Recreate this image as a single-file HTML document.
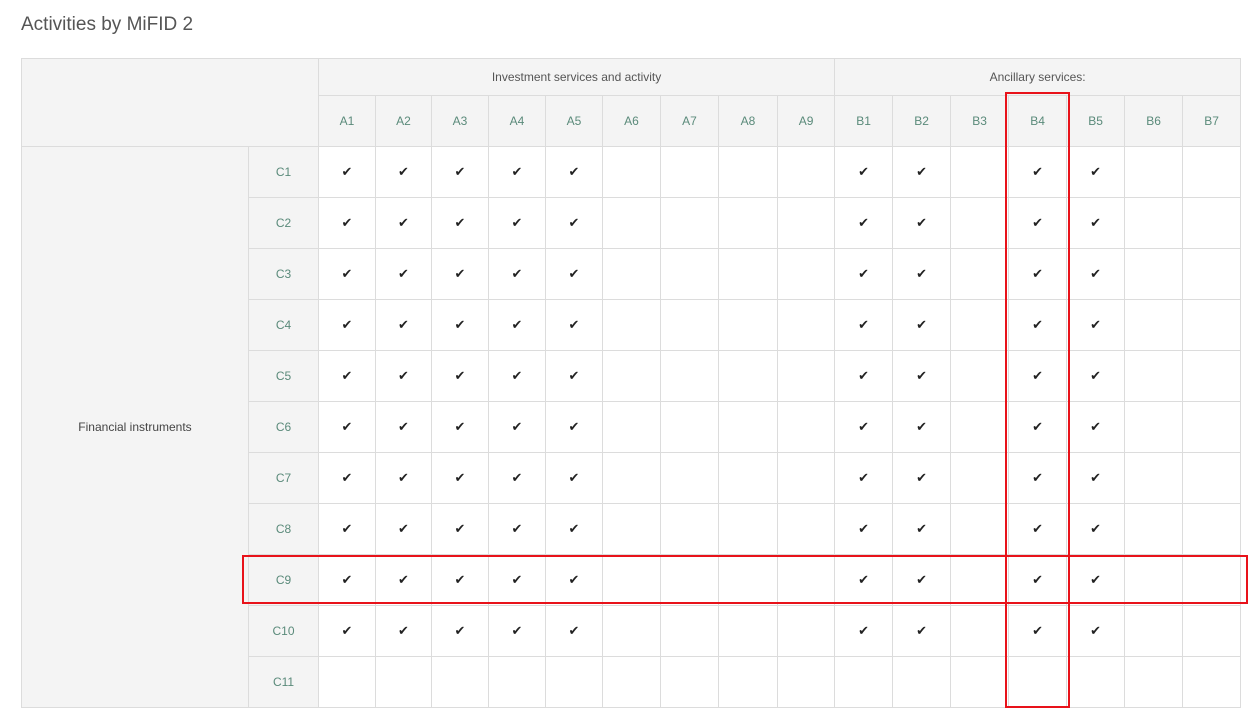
<!DOCTYPE html>
<html><head><meta charset="utf-8"><style>
body{margin:0;background:#fff;font-family:"Liberation Sans",sans-serif;width:1254px;height:719px;overflow:hidden;position:relative}
h1{position:absolute;left:21px;top:14px;margin:0;font-weight:normal;font-size:19px;color:#555}
table{position:absolute;left:21px;top:58px;border-collapse:collapse;table-layout:fixed;width:1220px}
td{border:1px solid #dcdcdc;text-align:center;font-size:12px;color:#444;padding:0;height:50px}
.g{background:#f4f4f4}
.l{color:#5a8a7a}
.h1 td{height:36px;color:#555;font-size:12px}
.c{font-size:13px;color:#222}
.r{position:absolute;border:2px solid #e8121a;box-sizing:border-box}
</style></head><body>
<h1>Activities by MiFID 2</h1>
<table>
<colgroup><col style="width:227px"><col style="width:70px"><col style="width:57px"><col style="width:56px"><col style="width:57px"><col style="width:57px"><col style="width:57px"><col style="width:58px"><col style="width:58px"><col style="width:59px"><col style="width:57px"><col style="width:58px"><col style="width:58px"><col style="width:58px"><col style="width:58px"><col style="width:58px"><col style="width:58px"><col style="width:58px"></colgroup>
<tr class="h1"><td class="g" colspan="2" rowspan="2"></td><td class="g" colspan="9">Investment services and activity</td><td class="g" colspan="7">Ancillary services:</td></tr>
<tr><td class="g l">A1</td><td class="g l">A2</td><td class="g l">A3</td><td class="g l">A4</td><td class="g l">A5</td><td class="g l">A6</td><td class="g l">A7</td><td class="g l">A8</td><td class="g l">A9</td><td class="g l">B1</td><td class="g l">B2</td><td class="g l">B3</td><td class="g l">B4</td><td class="g l">B5</td><td class="g l">B6</td><td class="g l">B7</td></tr>
<tr><td class="g" rowspan="11" style="color:#444">Financial instruments</td><td class="g l">C1</td><td class="c">✔</td><td class="c">✔</td><td class="c">✔</td><td class="c">✔</td><td class="c">✔</td><td></td><td></td><td></td><td></td><td class="c">✔</td><td class="c">✔</td><td></td><td class="c">✔</td><td class="c">✔</td><td></td><td></td></tr>
<tr><td class="g l">C2</td><td class="c">✔</td><td class="c">✔</td><td class="c">✔</td><td class="c">✔</td><td class="c">✔</td><td></td><td></td><td></td><td></td><td class="c">✔</td><td class="c">✔</td><td></td><td class="c">✔</td><td class="c">✔</td><td></td><td></td></tr>
<tr><td class="g l">C3</td><td class="c">✔</td><td class="c">✔</td><td class="c">✔</td><td class="c">✔</td><td class="c">✔</td><td></td><td></td><td></td><td></td><td class="c">✔</td><td class="c">✔</td><td></td><td class="c">✔</td><td class="c">✔</td><td></td><td></td></tr>
<tr><td class="g l">C4</td><td class="c">✔</td><td class="c">✔</td><td class="c">✔</td><td class="c">✔</td><td class="c">✔</td><td></td><td></td><td></td><td></td><td class="c">✔</td><td class="c">✔</td><td></td><td class="c">✔</td><td class="c">✔</td><td></td><td></td></tr>
<tr><td class="g l">C5</td><td class="c">✔</td><td class="c">✔</td><td class="c">✔</td><td class="c">✔</td><td class="c">✔</td><td></td><td></td><td></td><td></td><td class="c">✔</td><td class="c">✔</td><td></td><td class="c">✔</td><td class="c">✔</td><td></td><td></td></tr>
<tr><td class="g l">C6</td><td class="c">✔</td><td class="c">✔</td><td class="c">✔</td><td class="c">✔</td><td class="c">✔</td><td></td><td></td><td></td><td></td><td class="c">✔</td><td class="c">✔</td><td></td><td class="c">✔</td><td class="c">✔</td><td></td><td></td></tr>
<tr><td class="g l">C7</td><td class="c">✔</td><td class="c">✔</td><td class="c">✔</td><td class="c">✔</td><td class="c">✔</td><td></td><td></td><td></td><td></td><td class="c">✔</td><td class="c">✔</td><td></td><td class="c">✔</td><td class="c">✔</td><td></td><td></td></tr>
<tr><td class="g l">C8</td><td class="c">✔</td><td class="c">✔</td><td class="c">✔</td><td class="c">✔</td><td class="c">✔</td><td></td><td></td><td></td><td></td><td class="c">✔</td><td class="c">✔</td><td></td><td class="c">✔</td><td class="c">✔</td><td></td><td></td></tr>
<tr><td class="g l">C9</td><td class="c">✔</td><td class="c">✔</td><td class="c">✔</td><td class="c">✔</td><td class="c">✔</td><td></td><td></td><td></td><td></td><td class="c">✔</td><td class="c">✔</td><td></td><td class="c">✔</td><td class="c">✔</td><td></td><td></td></tr>
<tr><td class="g l">C10</td><td class="c">✔</td><td class="c">✔</td><td class="c">✔</td><td class="c">✔</td><td class="c">✔</td><td></td><td></td><td></td><td></td><td class="c">✔</td><td class="c">✔</td><td></td><td class="c">✔</td><td class="c">✔</td><td></td><td></td></tr>
<tr><td class="g l">C11</td><td></td><td></td><td></td><td></td><td></td><td></td><td></td><td></td><td></td><td></td><td></td><td></td><td></td><td></td><td></td><td></td></tr>
</table>
<div class="r" style="left:1005px;top:92px;width:65px;height:616px"></div>
<div class="r" style="left:242px;top:555px;width:1006px;height:49px"></div>
</body></html>
